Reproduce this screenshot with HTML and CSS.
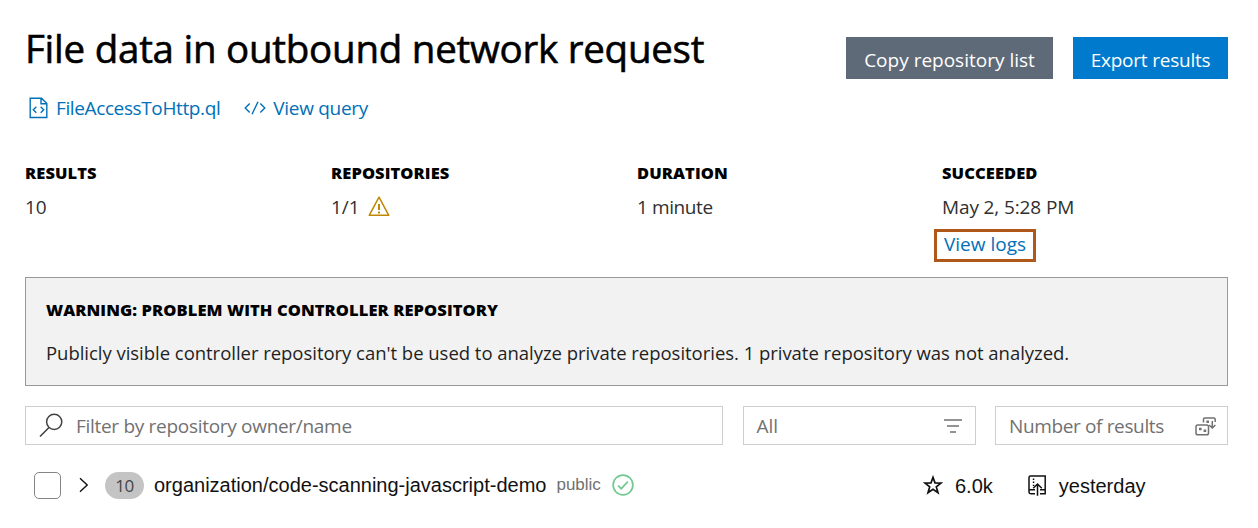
FILE: index.html
```html
<!DOCTYPE html>
<html lang="en">
<head>
<meta charset="utf-8">
<title>Variant analysis results</title>
<link rel="stylesheet" href="styles.css">
</head>
<body>
<main class="page">
  <header class="header">
    <div class="heading">
      <h1 class="title">File data in outbound network request</h1>
      <nav class="links">
        <a class="link"><svg class="file-icon" width="20" height="22" viewBox="0 0 20 22" fill="none" stroke="currentColor" stroke-width="1.4"><path d="M1.2 1.2h11.3l5.3 5.3v14H1.2z M12 1.2v5.6h5.8 M7.3 9.8l-3 3 3 3 M11.7 9.8l3 3-3 3"/></svg><span class="file-name">FileAccessToHttp.ql</span></a>
        <a class="link"><svg class="code-icon" width="22" height="14" viewBox="0 0 22 14" fill="none" stroke="currentColor" stroke-width="1.4"><path d="M5.7 2.4L1.2 6.9l4.5 4.5 M16.3 2.4l4.5 4.5-4.5 4.5 M14 .8L8 13.2"/></svg><span class="view-query">View query</span></a>
      </nav>
    </div>
    <div class="actions">
      <button class="button secondary"><span class="copy-label">Copy repository list</span></button>
      <button class="button primary"><span class="export-label">Export results</span></button>
    </div>
  </header>

  <section class="stats">
    <div class="stat"><h2 class="stat-title">Results</h2><div class="stat-value">10</div></div>
    <div class="stat"><h2 class="stat-title">Repositories</h2><div class="stat-value"><span class="ratio">1/1</span><svg class="warning-icon" width="22" height="21" viewBox="0 0 22 21" fill="none" stroke="currentColor" stroke-width="1.5" stroke-linejoin="round"><path d="M11 1.2L20.8 19.3H1.2z"/><path d="M11 8v6 M11 15.4v2" stroke-width="2"/></svg></div></div>
    <div class="stat"><h2 class="stat-title">Duration</h2><div class="stat-value minute">1 minute</div></div>
    <div class="stat"><h2 class="stat-title">Succeeded</h2><div class="stat-value date">May 2, 5:28 PM</div><a class="logs"><span>View logs</span></a></div>
  </section>

  <section class="alert">
    <h2 class="alert-title">Warning: Problem with controller repository</h2>
    <p class="alert-text">Publicly visible controller repository can't be used to analyze private repositories. 1 private repository was not analyzed.</p>
  </section>

  <section class="filters">
    <div class="field search"><svg width="26" height="26" viewBox="0 0 26 26" fill="none" stroke="currentColor" stroke-width="1.5"><circle cx="16.2" cy="8.8" r="7.6"/><path d="M11 14.4L2 23.6"/></svg><span class="placeholder">Filter by repository owner/name</span></div>
    <div class="field select"><span>All</span><svg class="filter-icon" width="18" height="14" viewBox="0 0 18 14" fill="none" stroke="currentColor" stroke-width="1.5"><path d="M0 1h18 M3 7h12 M6 13h6"/></svg></div>
    <div class="field select"><span class="sort-label">Number of results</span><svg class="sort-icon" width="22" height="19" viewBox="0 0 22 19" fill="none" stroke="currentColor" stroke-width="1.5"><rect x="1" y="8" width="12.5" height="9.8" rx="1.8"/><path d="M8.5 5.5V2.3Q8.5 1 9.8 1h9Q20.2 1 20.2 2.3V5 M17.3 4v6.7 M14.2 8l3.1 3 3.1-3"/><path d="M4 10.7h2.6v2.6H4z M8.6 12.5h2.6v2.6H8.6z M11.4 3.5H14v2.6h-2.6z" fill="currentColor" stroke="none"/></svg></div>
  </section>

  <section class="row">
    <div class="row-main">
      <span class="checkbox"></span>
      <svg class="chevron" width="10" height="16" viewBox="0 0 10 16" fill="none" stroke="currentColor" stroke-width="1.4"><path d="M1 1.2L8.2 8 1 14.8"/></svg>
      <span class="badge">10</span>
      <span class="repo">organization/code-scanning-javascript-demo</span>
      <span class="visibility">public</span>
      <svg class="check" width="22" height="22" viewBox="0 0 22 22" fill="none" stroke="currentColor" stroke-width="1.7"><circle cx="11" cy="11" r="9.9"/><path d="M6.1 11.6l3.2 3.1 6.5-7"/></svg>
    </div>
    <div class="row-meta">
      <svg class="star" width="20" height="20" viewBox="0 0 20 20" fill="none" stroke="currentColor" stroke-width="1.7"><path d="M10 2.4l2 5.5 6 .2-4.7 3.7 1.7 5.9-5-3.4-5 3.4 1.7-5.9L2 8.1l6-.2z"/></svg>
      <span class="star-count">6.0k</span>
      <svg class="repo-push" width="19" height="21" viewBox="0 0 19 21" fill="none" stroke="currentColor" stroke-width="1.5"><path d="M7 18.8H3.2Q1 18.8 1 16.6V2.5Q1 1 2.5 1h14.7v17.8H12 M1 14.8h6 M12 14.8h5 M9.5 20.8V9 M5.2 13.2l4.3-4.2 4.3 4.2"/><path d="M4.8 3.4h1.5v1.5H4.8z M4.8 6.6h1.5v1.5H4.8z M4.8 9.8h1.5V11H4.8z" fill="currentColor" stroke="none"/></svg>
      <span class="updated">yesterday</span>
    </div>
  </section>
</main>
</body>
</html>
```
FILE: styles.css
```css
* { box-sizing: border-box; }
body {
  margin: 0;
  background: #fff;
  color: #303030;
  font: 19px/26px "Open Sans", "Noto Sans", sans-serif;
  white-space: nowrap;
}
svg { flex: none; }
.page { padding: 26px 30px 0 25px; }
.header { display: flex; justify-content: space-between; height: 136px; }
.title { margin: 0; color: #000; font-size: 38.5px; line-height: 45px; font-weight: 500; letter-spacing: -0.25px; -webkit-text-stroke: 0.6px #000; }
.links { display: flex; gap: 24px; margin-top: 24px; }
.link { display: flex; align-items: center; color: #0070b8; }
.file-icon { margin: 0 7px 0 4px; }
.file-name { letter-spacing: -0.38px; }
.code-icon { margin-right: 7px; }
.view-query { letter-spacing: -0.3px; }
.actions { display: flex; gap: 20px; padding-top: 11px; }
.button { height: 42px; border: 0; padding: 4px 0 0; color: #fff; font: inherit; }
.secondary { width: 207px; background: #5f6a79; }
.primary { width: 155px; background: #007acc; }
.export-label { letter-spacing: -0.22px; }
.stats { display: grid; grid-template-columns: 306px 306px 305px 1fr; height: 115px; }
.stat-title, .alert-title { margin: 0; color: #000; font-size: 16.5px; line-height: 22px; font-weight: 800; letter-spacing: 0.08px; text-transform: uppercase; }
.stat-value { display: flex; align-items: center; height: 26px; margin-top: 10px; }
.minute { letter-spacing: -0.4px; }
.date { letter-spacing: -0.12px; }
.warning-icon { color: #bf8803; margin: -1px 0 0 8px; }
.logs { display: flex; justify-content: center; align-items: center; width: 102px; height: 33px; margin: 9px 0 0 -8px; border: 3px solid #b0571a; color: #0070b8; }
.logs span { margin-top: -3px; }
.alert { height: 109px; border: 1px solid #999; background: #f2f2f2; padding: 21px 20px; }
.alert-text { margin: 19px 0 0; color: #1f1f1f; font-size: 18.5px; letter-spacing: -0.03px; }
.filters { display: grid; grid-template-columns: 698px 233px 233px; justify-content: space-between; margin-top: 20px; }
.field { display: flex; align-items: center; height: 39px; border: 1px solid #cecece; color: #717171; }
.search { padding-left: 12px; gap: 12px; }
.search svg { color: #444; }
.placeholder { letter-spacing: -0.3px; }
.select { justify-content: space-between; padding: 0 13px 0 13px; }
.sort-label { letter-spacing: -0.36px; }
.sort-icon { margin: 2px -3px 0 0; }
.row { display: flex; margin-top: 20px; height: 40px; font-family: "Liberation Sans", Arial, sans-serif; font-size: 20px; color: #111; }
.row-main, .row-meta { display: flex; align-items: center; }
.row-main { width: 898px; padding-left: 9px; }
.checkbox { width: 27px; height: 27px; border: 1px solid #858585; border-radius: 5px; }
.chevron { margin: 0 16px 0 18px; }
.badge { width: 39px; height: 27px; border-radius: 14px; background: #c4c4c4; color: #444; font: 17px/28px "Open Sans", sans-serif; letter-spacing: -0.5px; text-align: center; }
.repo { margin-left: 10px; }
.visibility { margin-left: 10px; color: #717171; font-size: 17px; }
.check { color: #73c991; margin-left: 11px; }
.star-count { margin: 1px 35px 0 12px; }
.updated { margin: 1px 0 0 12px; }
```
